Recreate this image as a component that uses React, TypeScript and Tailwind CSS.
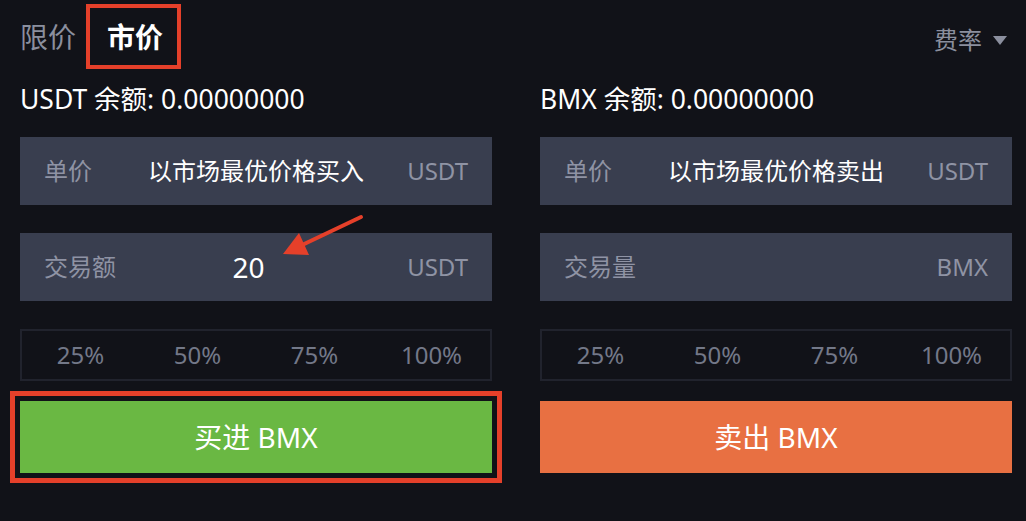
import React from "react";

const FONT = { fontFamily: '"Noto Sans", "Noto Sans CJK SC", sans-serif' };

function InputBox({ label, value, unit, valueClass = "" }: { label: string; value?: string; unit: string; valueClass?: string }) {
  return (
    <div className="h-[68px] bg-[#393e4f] flex items-center pl-[24px] pr-[24px]">
      <span className="w-[92px] text-[24px] text-[#8f93a4] whitespace-nowrap">{label}</span>
      <span className={`flex-1 text-center text-white whitespace-nowrap ${valueClass}`}>{value}</span>
      <span className="w-[92px] text-right text-[24px] text-[#8f93a4]">{unit}</span>
    </div>
  );
}

function Percents() {
  return (
    <div className="h-[52px] border-2 border-[#21232d] grid grid-cols-4 items-center text-[24px] text-[#737888]">
      <span className="text-center">25%</span>
      <span className="text-center">50%</span>
      <span className="text-center">75%</span>
      <span className="text-center">100%</span>
    </div>
  );
}

export default function App() {
  return (
    <div className="relative w-[1026px] h-[521px] bg-[#111218] overflow-hidden pt-[4px]" style={FONT}>
      {/* top row */}
      <div className="h-[65px] flex items-center pl-[20px] pr-[19px]">
        <span className="text-[28px] text-[#8b8f9e] leading-none">限价</span>
        <div className="ml-[10px] h-[65px] w-[95px] border-[4px] border-[#e5402a] flex items-center justify-center">
          <span className="text-[28px] font-bold text-white leading-none ml-[3px]">市价</span>
        </div>
        <div className="ml-auto mt-[6px] flex items-center">
          <span className="text-[24px] text-[#8b8f9e] leading-none">费率</span>
          <svg width="14" height="9" viewBox="0 0 14 9" className="ml-[11px] mt-[1px]">
            <polygon points="0,0 14,0 7,9" fill="#8b8f9e" />
          </svg>
        </div>
      </div>

      {/* columns */}
      <div className="flex pl-[20px] pr-[14px] gap-[48px]">
        <div className="w-[472px] flex flex-col">
          <div className="h-[62px] flex items-center text-[26.5px] text-white whitespace-nowrap">USDT 余额: 0.00000000</div>
          <div className="mt-[6px]">
            <InputBox label="单价" value="以市场最优价格买入" unit="USDT" valueClass="text-[24px]" />
          </div>
          <div className="mt-[28px]">
            <InputBox label="交易额" value="20" unit="USDT" valueClass="text-[28px] pr-[15px]" />
          </div>
          <div className="mt-[28px]">
            <Percents />
          </div>
          <div className="mt-[20px] h-[72px] bg-[#6ab843] flex items-center justify-center text-[28px] text-white outline-[5px] outline-solid outline-[#e5402a] outline-offset-[5px]">
            买进 BMX
          </div>
        </div>
        <div className="w-[472px] flex flex-col">
          <div className="h-[62px] flex items-center text-[26.5px] text-white whitespace-nowrap">BMX 余额: 0.00000000</div>
          <div className="mt-[6px]">
            <InputBox label="单价" value="以市场最优价格卖出" unit="USDT" valueClass="text-[24px]" />
          </div>
          <div className="mt-[28px]">
            <InputBox label="交易量" value="" unit="BMX" />
          </div>
          <div className="mt-[28px]">
            <Percents />
          </div>
          <div className="mt-[20px] h-[72px] bg-[#e87042] flex items-center justify-center text-[28px] text-white">
            卖出 BMX
          </div>
        </div>
      </div>

      {/* annotation arrow */}
      <svg className="absolute left-0 top-0 pointer-events-none" width="1026" height="521" viewBox="0 0 1026 521">
        <line x1="361" y1="217" x2="300" y2="246" stroke="#e5402a" strokeWidth="4" strokeLinecap="round" />
        <polygon points="283,254 299,233 309,255" fill="#e5402a" />
      </svg>
    </div>
  );
}
